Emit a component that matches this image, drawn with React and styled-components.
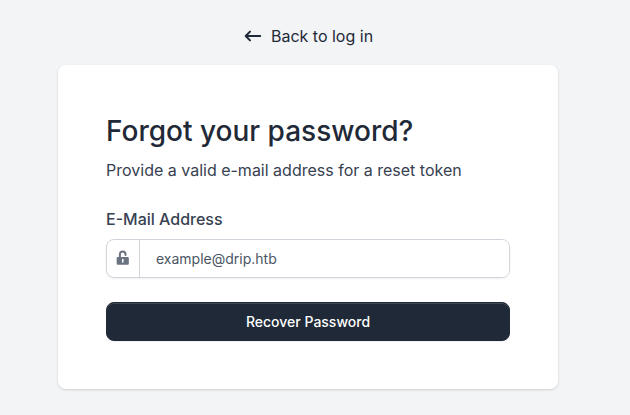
import React from 'react';
import styled, { createGlobalStyle } from 'styled-components';

const Global = createGlobalStyle`
  *, *::before, *::after { box-sizing: border-box; }
  body { margin: 0; background: #f2f4f6; font-family: Inter, sans-serif; color: #1f2937; }
`;
const Page = styled.main`
  width: 616px; height: 415px; overflow: hidden;
  display: flex; flex-direction: column; align-items: center;
  padding-top: 24px;
`;
const BackLink = styled.a`
  display: flex; align-items: center; gap: 8px;
  font-size: 16px; line-height: 24px; height: 24px;
  color: #1f2937; text-decoration: none;
`;
const ArrowIcon = styled.svg`
  width: 20px; height: 20px; fill: none;
  stroke: currentColor; stroke-width: 2; stroke-linecap: round; stroke-linejoin: round;
`;
const Card = styled.section`
  width: 500px; height: 324px; margin-top: 17px; padding: 48px;
  background: #fff; border-radius: 8px;
  box-shadow: 0 1px 3px rgba(0,0,0,.1), 0 1px 2px rgba(0,0,0,.06);
`;
const Title = styled.h1`
  margin: 0 0 9px; font-size: 28px; line-height: 36px; font-weight: 500;
`;
const Intro = styled.p`
  margin: 0; font-size: 16px; line-height: 24px; color: #374151;
`;
const Label = styled.label`
  display: block; margin: 25px 0 8px; font-size: 16px; line-height: 24px; font-weight: 500; color: #374151;
`;
const Field = styled.div`
  display: flex; height: 39px; border: 1px solid #d1d5db; border-radius: 8px; overflow: hidden;
  box-shadow: 0 1px 2px rgba(46,54,80,.075);
`;
const Addon = styled.span`
  width: 33px; border-right: 1px solid #d1d5db; color: #6b7280;
  display: flex; align-items: center; justify-content: center;
`;
const UnlockIcon = styled.svg`
  width: 14px; height: 15px; margin-bottom: 2px;
`;
const Input = styled.input`
  flex: 1; border: 0; outline: 0; padding: 0 16px; background: #fff;
  font: 400 14px/20px Inter, sans-serif;
  &::placeholder { color: #4b5563; opacity: 1; }
`;
const Button = styled.button`
  display: block; width: 100%; height: 39px; margin-top: 24px; padding: 0;
  border: 1px solid #1f2937; border-radius: 8px; background: #1f2937; color: #fff;
  font: 500 14px/20px Inter, sans-serif;
  box-shadow: inset 0 1px 0 rgba(255,255,255,.15), 0 1px 1px rgba(46,54,80,.075);
`;

export default function App() {
  return (
    <Page>
      <Global />
      <BackLink>
        <ArrowIcon viewBox="0 0 20 20">
          <path d="M7 5.600L2.700 10l4.300 4.400M2.700 10h14.500" />
        </ArrowIcon>
        Back to log in
      </BackLink>
      <Card>
        <Title>Forgot your password?</Title>
        <Intro>Provide a valid e-mail address for a reset token</Intro>
        <Label htmlFor="email">E-Mail Address</Label>
        <Field>
          <Addon>
            <UnlockIcon viewBox="0 0 14 15">
              <path d="M3.900 8V4.300a2.800 2.800 0 0 1 5.600 0v.6" fill="none" stroke="currentColor" strokeWidth="2" strokeLinecap="round" />
              <path fillRule="evenodd" d="M1.700 7h10.100a1 1 0 0 1 1 1v5.700a1 1 0 0 1-1 1H1.700a1 1 0 0 1-1-1V8a1 1 0 0 1 1-1zM6 9.600v2.400a.8.8 0 0 0 1.600 0V9.600a.8.8 0 0 0-1.600 0z" fill="currentColor" />
            </UnlockIcon>
          </Addon>
          <Input id="email" type="email" placeholder="example@drip.htb" />
        </Field>
        <Button>Recover Password</Button>
      </Card>
    </Page>
  );
}
